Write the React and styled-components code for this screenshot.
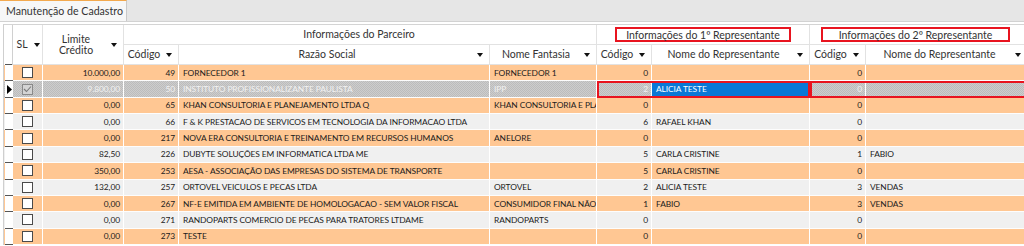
import React from "react";
import styled, { createGlobalStyle } from "styled-components";

const COLS = "9px 30px 81px 55px 311px 107px 55px 158px 56px 162px";

const rows = [
  { lim: "10.000,00", cod: 49, razao: "FORNECEDOR 1", fant: "FORNECEDOR 1", c1: 0, n1: "", c2: 0, n2: "" },
  { lim: "9.800,00", cod: 50, razao: "INSTITUTO PROFISSIONALIZANTE PAULISTA", fant: "IPP", c1: 2, n1: "ALICIA TESTE", c2: 0, n2: "", selected: true, checked: true },
  { lim: "0,00", cod: 65, razao: "KHAN CONSULTORIA E PLANEJAMENTO LTDA  Q", fant: "KHAN CONSULTORIA E PLANEJAMENTO", c1: 0, n1: "", c2: 0, n2: "" },
  { lim: "0,00", cod: 66, razao: "F & K PRESTACAO DE SERVICOS EM TECNOLOGIA DA INFORMACAO LTDA", fant: "", c1: 6, n1: "RAFAEL KHAN", c2: 0, n2: "" },
  { lim: "0,00", cod: 217, razao: "NOVA ERA CONSULTORIA E TREINAMENTO EM RECURSOS HUMANOS", fant: "ANELORE", c1: 0, n1: "", c2: 0, n2: "" },
  { lim: "82,50", cod: 226, razao: "DUBYTE SOLUÇÕES EM INFORMATICA  LTDA ME", fant: "", c1: 5, n1: "CARLA CRISTINE", c2: 1, n2: "FABIO" },
  { lim: "350,00", cod: 253, razao: "AESA - ASSOCIAÇÃO DAS EMPRESAS DO SISTEMA DE TRANSPORTE", fant: "", c1: 5, n1: "CARLA CRISTINE", c2: 0, n2: "" },
  { lim: "132,00", cod: 257, razao: "ORTOVEL VEICULOS E PECAS LTDA", fant: "ORTOVEL", c1: 2, n1: "ALICIA TESTE", c2: 3, n2: "VENDAS" },
  { lim: "0,00", cod: 267, razao: "NF-E EMITIDA EM AMBIENTE DE HOMOLOGACAO - SEM VALOR FISCAL", fant: "CONSUMIDOR FINAL NÃO CONTRIBUINTE", c1: 1, n1: "FABIO", c2: 3, n2: "VENDAS" },
  { lim: "0,00", cod: 271, razao: "RANDOPARTS COMERCIO DE PECAS PARA TRATORES LTDAME", fant: "RANDOPARTS", c1: 0, n1: "", c2: 0, n2: "" },
  { lim: "0,00", cod: 273, razao: "TESTE", fant: "", c1: 0, n1: "", c2: 0, n2: "" },
];

const GlobalStyle = createGlobalStyle`
  body {
    margin: 0;
    background: #ffffff;
    font-family: Lato, "Liberation Sans", sans-serif;
    overflow: hidden;
  }
`;

const Page = styled.div`
  width: 1024px;
  height: 246px;
  overflow: hidden;
  background: #ffffff;
`;

const TabStrip = styled.div`
  display: flex;
  height: 22px;
  background: #e6e6e6;
  border-bottom: 1px solid #d2d2d2;
  box-sizing: border-box;
`;

const Tab = styled.div`
  width: 127px;
  box-sizing: border-box;
  background: #f7f7f7;
  border-top: 1px solid #f3a94e;
  border-right: 1px solid #c9c9c9;
  display: flex;
  align-items: center;
  padding-left: 6px;
  font-size: 10.6px;
  color: #333;
  white-space: nowrap;
  overflow: hidden;
`;

const Frame = styled.div`
  margin-top: 2px;
  padding-left: 3px;
`;

const Grid = styled.div`
  border-left: 1px solid #cfcfcf;
  border-top: 1px solid #d4d4d4;
  width: 1030px;
`;

const Header = styled.div`
  display: grid;
  grid-template-columns: ${COLS};
  grid-template-rows: 20px 20px;
  background: #ffffff;
`;

const HeadCell = styled.div`
  grid-column: span ${(p) => p.$span || 1};
  grid-row: span ${(p) => p.$rows || 1};
  display: flex;
  align-items: center;
  justify-content: center;
  box-sizing: border-box;
  border-right: 1px solid #e2e2e2;
  border-bottom: 1px solid #e2e2e2;
  padding: 0 ${(p) => (p.$tight ? 3 : 6)}px 0 4px;
  font-size: 10.5px;
  color: #333;
  white-space: nowrap;
  overflow: hidden;
`;

const HeadLabel = styled.span`
  flex: ${(p) => (p.$grow ? 1 : "none")};
  text-align: center;
  line-height: 11px;
`;

const Arrow = styled.span`
  flex: none;
  width: 0;
  height: 0;
  margin-left: 6px;
  border-left: 3.5px solid transparent;
  border-right: 3.5px solid transparent;
  border-top: 4px solid #111;
`;

const Badge = styled.span`
  width: ${(p) => p.$w}px;
  height: 15px;
  box-sizing: border-box;
  border: 2px solid #e8141f;
  display: flex;
  align-items: center;
  justify-content: center;
  margin-left: ${(p) => p.$shift || 0}px;
`;

const Indicator = styled.div`
  display: flex;
  align-items: center;
  justify-content: center;
  margin-left: 1px;
  border-bottom: 1px solid #555;
  background: #ffffff;
`;

const Row = styled.div`
  display: grid;
  grid-template-columns: ${COLS};
  height: 16.36px;
  color: ${(p) => (p.$selected ? "#f2f2f2" : "#1b1b1b")};
  background: ${(p) =>
    p.$selected
      ? "repeating-conic-gradient(#bcbcbc 0 25%, #cdcdcd 0 50%) 0 0 / 2px 2px"
      : p.$tone === "orange"
      ? "#ffc793"
      : "#f0f0f0"};
`;

const Cell = styled.div`
  display: flex;
  align-items: center;
  justify-content: ${(p) => (p.$num ? "flex-end" : p.$center ? "center" : "flex-start")};
  box-sizing: border-box;
  padding: 0 ${(p) => (p.$num ? 3 : 4)}px 0 4px;
  border-right: 1px solid #ffffff;
  border-bottom: 1px solid #fdfdfd;
  font-size: 8.4px;
  letter-spacing: -0.08px;
  white-space: nowrap;
  overflow: hidden;
  background: ${(p) => (p.$active ? "#0a78d6" : "transparent")};
  color: ${(p) => (p.$active ? "#ffffff" : "inherit")};
`;

const Marked = styled.div`
  grid-column: span 2;
  display: grid;
  grid-template-columns: ${(p) => p.$cols};
  outline: 2px solid #e8141f;
  outline-offset: -2px;
`;

const Check = styled.span`
  width: 11px;
  height: 11px;
  box-sizing: border-box;
  border: 1px solid ${(p) => (p.$dim ? "#8a8a8a" : "#4a4a4a")};
  background: ${(p) => (p.$dim ? "#d4d4d4" : "#ffffff")};
  display: flex;
  align-items: center;
  justify-content: center;
`;

function Pointer() {
  return (
    <svg width="5" height="9" viewBox="0 0 5 9">
      <path d="M0 0 L5 4.5 L0 9 Z" fill="#000" />
    </svg>
  );
}

function Tick() {
  return (
    <svg width="9" height="8" viewBox="0 0 9 8">
      <path d="M1 4 L3.5 6.5 L8 1.5" stroke="#7a7a7a" strokeWidth="1.1" fill="none" />
    </svg>
  );
}

function GridHeader() {
  return (
    <Header>
      <HeadCell $rows={2} style={{ borderRight: "1px solid #d0d0d0", borderBottom: "none", padding: 0 }}>
        <Indicator style={{ alignSelf: "stretch", flex: 1 }} />
      </HeadCell>
      <HeadCell $rows={2} $tight>
        <HeadLabel>SL</HeadLabel>
        <Arrow />
      </HeadCell>
      <HeadCell $rows={2}>
        <HeadLabel $grow>
          Limite
          <br />
          Crédito
        </HeadLabel>
        <Arrow />
      </HeadCell>
      <HeadCell $span={3}>
        <HeadLabel>Informações do Parceiro</HeadLabel>
      </HeadCell>
      <HeadCell $span={2}>
        <Badge $w={176} $shift={2}>Informações do 1º Representante</Badge>
      </HeadCell>
      <HeadCell $span={2}>
        <Badge $w={189} $shift={-4}>Informações do 2º Representante</Badge>
      </HeadCell>
      <HeadCell>
        <HeadLabel $grow>Código</HeadLabel>
        <Arrow />
      </HeadCell>
      <HeadCell>
        <HeadLabel $grow>Razão Social</HeadLabel>
        <Arrow />
      </HeadCell>
      <HeadCell>
        <HeadLabel $grow>Nome Fantasia</HeadLabel>
        <Arrow />
      </HeadCell>
      <HeadCell>
        <HeadLabel $grow>Código</HeadLabel>
        <Arrow />
      </HeadCell>
      <HeadCell>
        <HeadLabel $grow>Nome do Representante</HeadLabel>
        <Arrow />
      </HeadCell>
      <HeadCell>
        <HeadLabel $grow>Código</HeadLabel>
        <Arrow />
      </HeadCell>
      <HeadCell>
        <HeadLabel $grow>Nome do Representante</HeadLabel>
        <Arrow />
      </HeadCell>
    </Header>
  );
}

function DataRow({ r, i }) {
  const rep1 = (
    <>
      <Cell $num>{r.c1}</Cell>
      <Cell $active={r.selected}>{r.n1}</Cell>
    </>
  );
  const rep2 = (
    <>
      <Cell $num>{r.c2}</Cell>
      <Cell>{r.n2}</Cell>
    </>
  );
  return (
    <Row $selected={r.selected} $tone={i % 2 === 0 ? "orange" : "gray"}>
      <Indicator>{r.selected && <Pointer />}</Indicator>
      <Cell $center>
        <Check $dim={r.selected}>{r.checked && <Tick />}</Check>
      </Cell>
      <Cell $num>{r.lim}</Cell>
      <Cell $num>{r.cod}</Cell>
      <Cell>{r.razao}</Cell>
      <Cell>{r.fant}</Cell>
      {r.selected ? <Marked $cols="55px 158px">{rep1}</Marked> : rep1}
      {r.selected ? <Marked $cols="56px 162px">{rep2}</Marked> : rep2}
    </Row>
  );
}

export default function App() {
  return (
    <Page>
      <GlobalStyle />
      <TabStrip>
        <Tab>Manutenção de Cadastro</Tab>
      </TabStrip>
      <Frame>
        <Grid>
          <GridHeader />
          {rows.map((r, i) => (
            <DataRow key={r.cod} r={r} i={i} />
          ))}
        </Grid>
      </Frame>
    </Page>
  );
}
